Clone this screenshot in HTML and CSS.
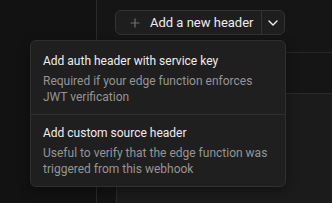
FILE: index.html
```html
<!DOCTYPE html>
<html>
<head>
<meta charset="utf-8">
<link rel="stylesheet" href="styles.css">
</head>
<body>
<div class="app">
  <aside class="sidebar"></aside>
  <main class="main">
    <div class="toolbar">
      <div class="split-btn">
        <button class="btn-main">
          <svg class="plus" width="10" height="10" viewBox="0 0 10 10"><path d="M5 0.5V9.5M0.5 5H9.5" stroke="#6f6f6f" stroke-width="1.2" fill="none"/></svg>
          <span>Add a new header</span>
        </button>
        <button class="btn-caret">
          <svg width="10" height="6" viewBox="0 0 10 6"><path d="M1 1L5 5L9 1" stroke="#ededed" stroke-width="1.4" fill="none" stroke-linecap="round" stroke-linejoin="round"/></svg>
        </button>
      </div>
    </div>
    <div class="section"></div>
    <div class="table">
      <div class="col-narrow"></div>
      <div class="col-rest"></div>
    </div>
  </main>
</div>
<div class="menu">
  <div class="menu-item">
    <div class="item-title">Add auth header with service key</div>
    <div class="item-desc">Required if your edge function enforces JWT verification</div>
  </div>
  <div class="menu-item">
    <div class="item-title">Add custom source header</div>
    <div class="item-desc">Useful to verify that the edge function was triggered from this webhook</div>
  </div>
</div>
</body>
</html>
```
FILE: styles.css
```css
* { box-sizing: border-box; }
html, body { margin: 0; padding: 0; width: 332px; height: 203px; overflow: hidden; }
body {
  background: #121212;
  font-family: "Roboto", "Noto Sans", sans-serif;
  color: #ededed;
}
.app { display: flex; height: 203px; }
.sidebar { width: 97px; background: #121212; border-right: 1px solid #2a2a2a; }
.main { flex: 1; display: flex; flex-direction: column; background: #151515; }
.toolbar {
  height: 53px;
  border-bottom: 1px solid #262626;
  display: flex;
  justify-content: flex-end;
  align-items: flex-start;
  padding: 10px 47px 0 0;
}
.split-btn {
  display: flex;
  height: 25px;
  border: 1px solid #333;
  border-radius: 6px;
  background: #1e1e1e;
  overflow: hidden;
}
.split-btn button {
  background: transparent;
  border: 0;
  color: #ededed;
  font: inherit;
  padding: 0;
  display: flex;
  align-items: center;
}
.btn-main {
  width: 145px;
  padding-left: 14px !important;
  gap: 10px;
  font-size: 13px !important;
}
.btn-caret {
  width: 23px;
  justify-content: center;
  border-left: 1px solid #333 !important;
}
.section { height: 41px; border-bottom: 1px solid #2a2a2a; background: #151515; }
.table { flex: 1; display: flex; }
.col-narrow { width: 20px; border-right: 1px solid #2a2a2a; background: #131313; }
.col-rest { flex: 1; background: #1b1b1b; }
.menu {
  position: absolute;
  left: 30px;
  top: 40px;
  width: 256px;
  height: 147px;
  background: #1f1f1f;
  border: 1px solid #2f2f2f;
  border-radius: 6px;
  box-shadow: 0 4px 12px rgba(0,0,0,0.35);
}
.menu-item { padding: 12px 8px 0 12px; height: 73px; }
.menu-item + .menu-item { border-top: 1px solid #2f2f2f; padding-top: 10px; }
.item-title { font-size: 12px; line-height: 16px; color: #ededed; }
.item-desc { font-size: 12px; line-height: 16px; color: #959595; margin-top: 4px; }
```
